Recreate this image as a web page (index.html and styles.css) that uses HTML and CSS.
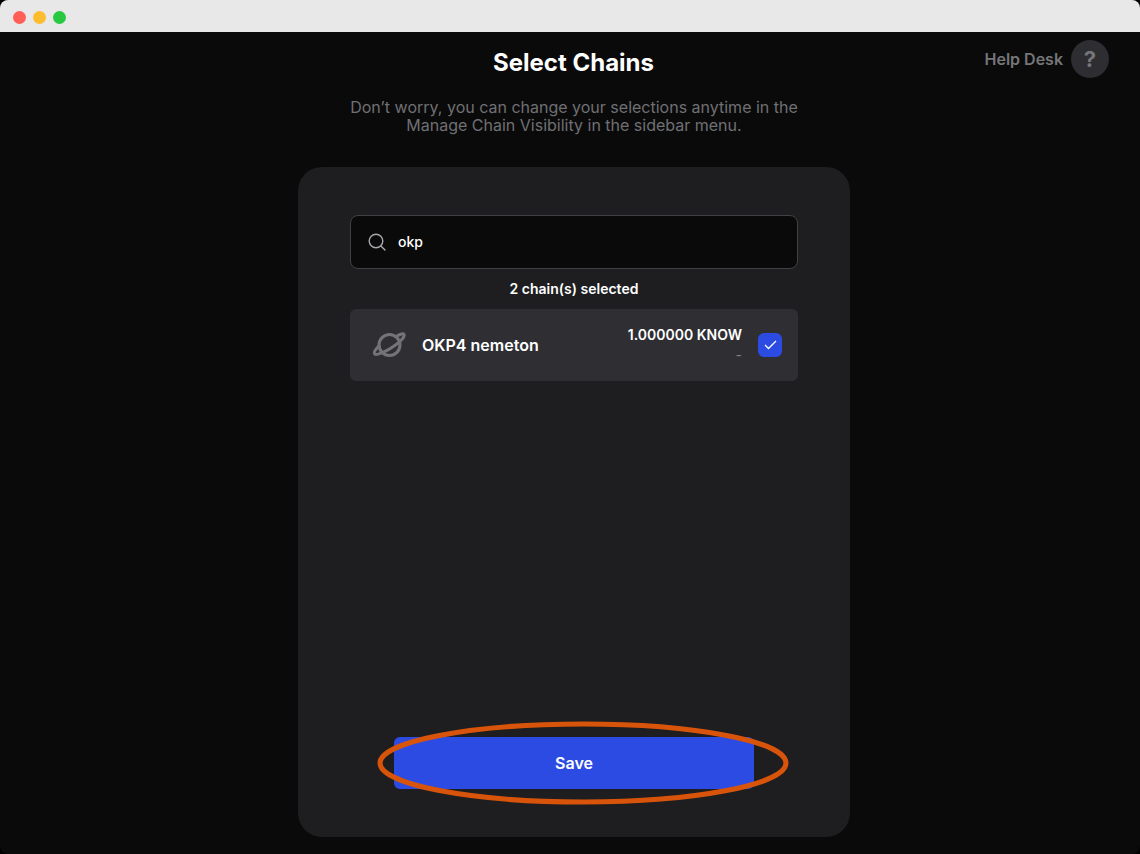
FILE: index.html
```html
<!DOCTYPE html>
<html lang="en">
<head>
<meta charset="utf-8">
<title>Select Chains</title>
<link rel="stylesheet" href="styles.css">
</head>
<body>
<div class="window">
  <div class="titlebar">
    <span class="dot dot-close"></span>
    <span class="dot dot-minimize"></span>
    <span class="dot dot-zoom"></span>
  </div>
  <header class="header">
    <h1 class="title">Select Chains</h1>
    <a class="help" href="#help">Help Desk <span class="help-mark">?</span></a>
  </header>
  <main class="main">
    <p class="intro">Don’t worry, you can change your selections anytime in the<br>Manage Chain Visibility in the sidebar menu.</p>
    <form class="card">
      <label class="search">
        <svg class="search-icon" viewBox="0 0 18 18" aria-hidden="true"><circle cx="8" cy="8" r="6.8"/><path d="M12.9 12.9 17 17"/></svg>
        <input class="search-input" type="text" value="okp" aria-label="Search chains">
      </label>
      <p class="count">2 chain(s) selected</p>
      <label class="chain">
        <svg class="planet" viewBox="0 0 34 28" aria-hidden="true">
          <circle cx="17.500" cy="14" r="10.500"/>
          <path d="M25 5C28.500 2.800 31.300 2.200 32 3.400C33 5.400 29 10.200 22.500 14.800C14.500 20.500 5 24.800 2.800 23C1.400 21.600 3.400 18.200 7 14.800"/>
        </svg>
        <span class="chain-name">OKP4 nemeton</span>
        <span class="balance"><span class="amount">1.000000 KNOW</span><span class="fiat">-</span></span>
        <input class="check" type="checkbox" checked>
      </label>
      <div class="actions">
        <button class="save" type="button">Save</button>
        <svg class="highlight" viewBox="0 0 412 84" aria-hidden="true"><ellipse cx="206" cy="42" rx="203" ry="39"/></svg>
      </div>
    </form>
  </main>
</div>
</body>
</html>
```
FILE: styles.css
```css
* { box-sizing: border-box; }

body {
  margin: 0;
  background: #000;
  color: #fff;
  font-family: Inter, "Liberation Sans", sans-serif;
}

.window {
  display: flex;
  flex-direction: column;
  min-height: 100vh;
  border-radius: 8px;
  overflow: hidden;
  background: #0a0a0a;
}

.titlebar {
  display: flex;
  align-items: center;
  gap: 7px;
  height: 32px;
  padding: 2px 13px 0;
  background: #e8e8e8;
}

.dot { width: 13px; height: 13px; border-radius: 50%; }
.dot-close { background: #ff5f57; }
.dot-minimize { background: #fdbc2e; }
.dot-zoom { background: #28c840; }

.header {
  display: grid;
  grid-template-columns: 1fr auto 1fr;
  align-items: center;
  padding: 8px 31px 0 38px;
}

.title {
  grid-column: 2;
  margin: 8px 0 0;
  font-size: 24px;
  line-height: 30px;
  font-weight: 700;
}

.help {
  justify-self: end;
  display: flex;
  align-items: center;
  gap: 8px;
  color: #76767a;
  font-size: 16px;
  font-weight: 600;
  text-decoration: none;
}

.help-mark {
  display: grid;
  place-items: center;
  width: 38px;
  height: 38px;
  border-radius: 50%;
  background: #2d2d32;
  font-size: 22px;
  font-weight: 700;
}

.main {
  flex: 1;
  display: flex;
  flex-direction: column;
  align-items: center;
  padding: 20px 0 17px 8px;
}

.intro {
  margin: 0 0 33px;
  color: #707074;
  font-size: 16px;
  line-height: 18px;
  text-align: center;
}

.card {
  flex: 1;
  display: flex;
  flex-direction: column;
  width: 100%;
  max-width: 552px;
  padding: 48px 52px;
  border-radius: 24px;
  background: #1e1e20;
}

.search {
  display: flex;
  align-items: center;
  gap: 12px;
  height: 54px;
  padding: 0 17px;
  border: 1px solid #414145;
  border-radius: 8px;
  background: #0a0a0a;
}

.search-icon {
  width: 18px;
  height: 18px;
  fill: none;
  stroke: #a8a8ac;
  stroke-width: 1.4;
  stroke-linecap: round;
}

.search-input {
  flex: 1;
  min-width: 0;
  padding: 0;
  border: 0;
  outline: 0;
  background: transparent;
  color: #fff;
  font: 500 14px/20px Inter, sans-serif;
}

.count {
  margin: 10px 0;
  font-size: 14px;
  line-height: 20px;
  font-weight: 600;
  text-align: center;
}

.chain {
  display: flex;
  align-items: center;
  gap: 16px;
  height: 72px;
  padding: 0 16px 0 22px;
  border-radius: 6px;
  background: #2e2e33;
}

.planet {
  width: 34px;
  height: 28px;
  fill: none;
  stroke: #737378;
  stroke-width: 3;
  stroke-linejoin: round;
  stroke-linecap: round;
}

.chain-name { flex: 1; font-size: 16px; font-weight: 600; }

.balance {
  display: flex;
  flex-direction: column;
  align-items: flex-end;
  font-size: 14px;
  line-height: 20px;
}

.amount { font-weight: 600; }
.fiat { color: #808084; }

.check {
  appearance: none;
  width: 24px;
  height: 24px;
  margin: 0;
  border-radius: 6px;
}

.check:checked {
  background: #2c4be2 url("data:image/svg+xml,%3Csvg xmlns='http://www.w3.org/2000/svg' viewBox='0 0 24 24'%3E%3Cpath d='M7 12 10.500 15.500 18 8' fill='none' stroke='white' stroke-width='1.300'/%3E%3C/svg%3E");
}

.actions {
  position: relative;
  display: flex;
  margin-top: auto;
  padding: 0 44px;
}

.save {
  flex: 1;
  height: 52px;
  border: 0;
  border-radius: 6px;
  background: #2c4be2;
  color: #fff;
  font: 600 16px/20px Inter, sans-serif;
}

.highlight {
  position: absolute;
  top: -16px;
  left: 27px;
  width: 412px;
  height: 84px;
  fill: none;
  stroke: #d9540b;
  stroke-width: 5;
  pointer-events: none;
}
```
